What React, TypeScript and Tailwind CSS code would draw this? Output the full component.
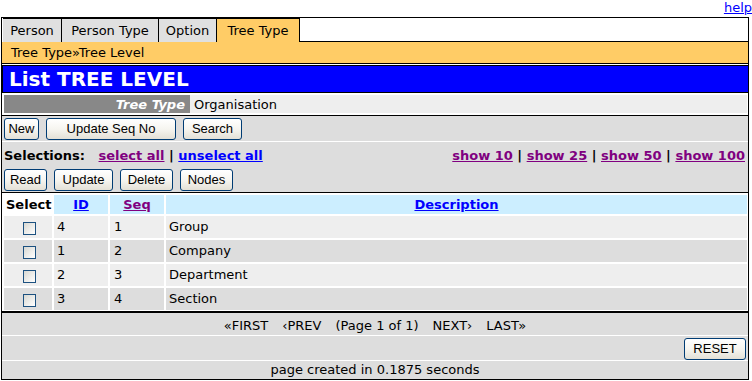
const btn =
  "h-[22px] rounded-[3px] border border-[#003c74] bg-linear-to-b from-white via-[#f6f5f0] to-[#e3e0d6] text-center text-[13px] leading-[20px] text-black font-['Liberation_Sans',Arial,sans-serif]"

const tabs = [
  { label: 'Person', w: 'w-[58px]', active: false },
  { label: 'Person Type', w: 'w-[96px]', active: false },
  { label: 'Option', w: 'w-[57px]', active: false },
  { label: 'Tree Type', w: 'w-[82px]', active: true },
]

const levels = [
  { id: '4', seq: '1', desc: 'Group' },
  { id: '1', seq: '2', desc: 'Company' },
  { id: '2', seq: '3', desc: 'Department' },
  { id: '3', seq: '4', desc: 'Section' },
]

const pager = ['«FIRST', '‹PREV', '(Page 1 of 1)', 'NEXT›', 'LAST»']

function Checkbox() {
  return (
    <span className="block h-[13px] w-[13px] border border-[#1c5180] bg-linear-to-br from-[#d8d8d2] to-white" />
  )
}

export default function App() {
  return (
    <div className="h-[381px] w-[752px] overflow-hidden bg-white text-[13px] leading-[15px] text-black font-['DejaVu_Sans',Verdana,sans-serif]">
      <div className="h-[17px] text-right">
        <a href="#" className="text-[#0000ff] underline">help</a>
      </div>

      <div className="ml-[1px] w-[748px] border border-black bg-white">
        {/* tabs */}
        <div className="flex h-[24px] pl-[1px]">
          {tabs.map((t) => (
            <div
              key={t.label}
              className={`${t.w} box-content flex items-center justify-center border-t border-r border-black ${
                t.active ? 'bg-[#ffcc66]' : 'bg-[#e0e0e0]'
              }`}
            >
              {t.label}
            </div>
          ))}
          <div className="flex-1 border-b border-black" />
        </div>

        <div className="h-[22px] border-b border-black bg-[#ffcc66] pl-[9px] pt-[3px]">
          Tree Type»Tree Level
        </div>

        <div className="mt-[1px] h-[28px] border-y border-l border-black bg-[#0000ff] pl-[6px] pt-[1px] text-[20px] font-bold leading-[24px] text-white">
          List TREE LEVEL
        </div>

        <div className="flex py-[2px] pl-[2px] pr-[1px]">
          <div className="h-[18px] w-[186px] bg-[#888888] pr-[5px] pt-[2px] text-right font-bold italic text-white">
            Tree Type
          </div>
          <div className="h-[18px] flex-1 bg-[#eeeeee] pl-[4px] pt-[2px]">Organisation</div>
        </div>

        <div className="border-y border-black bg-[#dddddd]">
          <div className="flex gap-[7px] pb-[1px] pl-[2px] pt-[2px]">
            <button className={`${btn} w-[35px]`}>New</button>
            <button className={`${btn} w-[130px]`}>Update Seq No</button>
            <button className={`${btn} w-[59px]`}>Search</button>
          </div>
          <div className="mt-[1px] bg-[#dddddd] pb-[1px] pl-[2px] pr-[3px] pt-[6px] shadow-[0_-1px_0_white]">
            <div className="flex justify-between font-bold">
              <div className="whitespace-pre">
                Selections:{'\u00a0\u00a0 '}
                <a href="#" className="text-[#800080] underline">select all</a>
                {' | '}
                <a href="#" className="text-[#0000ff] underline">unselect all</a>
              </div>
              <div className="whitespace-pre">
                <a href="#" className="text-[#800080] underline">show 10</a>
                {' | '}
                <a href="#" className="text-[#800080] underline">show 25</a>
                {' | '}
                <a href="#" className="text-[#800080] underline">show 50</a>
                {' | '}
                <a href="#" className="text-[#800080] underline">show 100</a>
              </div>
            </div>
            <div className="mt-[6px] flex gap-[7px]">
              <button className={`${btn} w-[43px]`}>Read</button>
              <button className={`${btn} w-[59px]`}>Update</button>
              <button className={`${btn} w-[53px]`}>Delete</button>
              <button className={`${btn} w-[53px]`}>Nodes</button>
            </div>
          </div>
        </div>

        {/* table */}
        <div className="flex flex-col gap-[2px] border-b-2 border-black pb-[1px] pl-[2px] pr-[1px] pt-[2px]">
          <div className="grid h-[19px] grid-cols-[48px_54px_54px_1fr] gap-x-[2px] font-bold">
            <div className="pl-[2px] pt-[2px]">Select</div>
            <div className="bg-[#cceeff] pt-[2px] text-center">
              <a href="#" className="text-[#0000ff] underline">ID</a>
            </div>
            <div className="bg-[#cceeff] pt-[2px] text-center">
              <a href="#" className="text-[#800080] underline">Seq</a>
            </div>
            <div className="bg-[#cceeff] pt-[2px] text-center">
              <a href="#" className="text-[#0000ff] underline">Description</a>
            </div>
          </div>
          {levels.map((r, i) => {
            const bg = i % 2 === 0 ? 'bg-[#eeeeee]' : 'bg-[#dddddd]'
            return (
              <div key={r.id} className="grid h-[22px] grid-cols-[48px_54px_54px_1fr] gap-x-[2px]">
                <div className={`${bg} flex justify-center pl-[3px] pt-[6px]`}>
                  <Checkbox />
                </div>
                <div className={`${bg} pl-[3px] pt-[3px]`}>{r.id}</div>
                <div className={`${bg} pl-[4px] pt-[3px]`}>{r.seq}</div>
                <div className={`${bg} pl-[3px] pt-[3px]`}>{r.desc}</div>
              </div>
            )
          })}
        </div>

        <div className="flex h-[22px] justify-center gap-[14px] bg-[#dddddd] pt-[5px]">
          {pager.map((p) => (
            <span key={p}>{p}</span>
          ))}
        </div>
        <div className="mt-[1px] flex h-[24px] justify-end bg-[#dddddd] pr-[2px] pt-[2px]">
          <button className={`${btn} w-[62px]`}>RESET</button>
        </div>
        <div className="mt-[1px] h-[18px] bg-[#dddddd] pt-[1px] text-center">
          page created in 0.1875 seconds
        </div>
      </div>
    </div>
  )
}
